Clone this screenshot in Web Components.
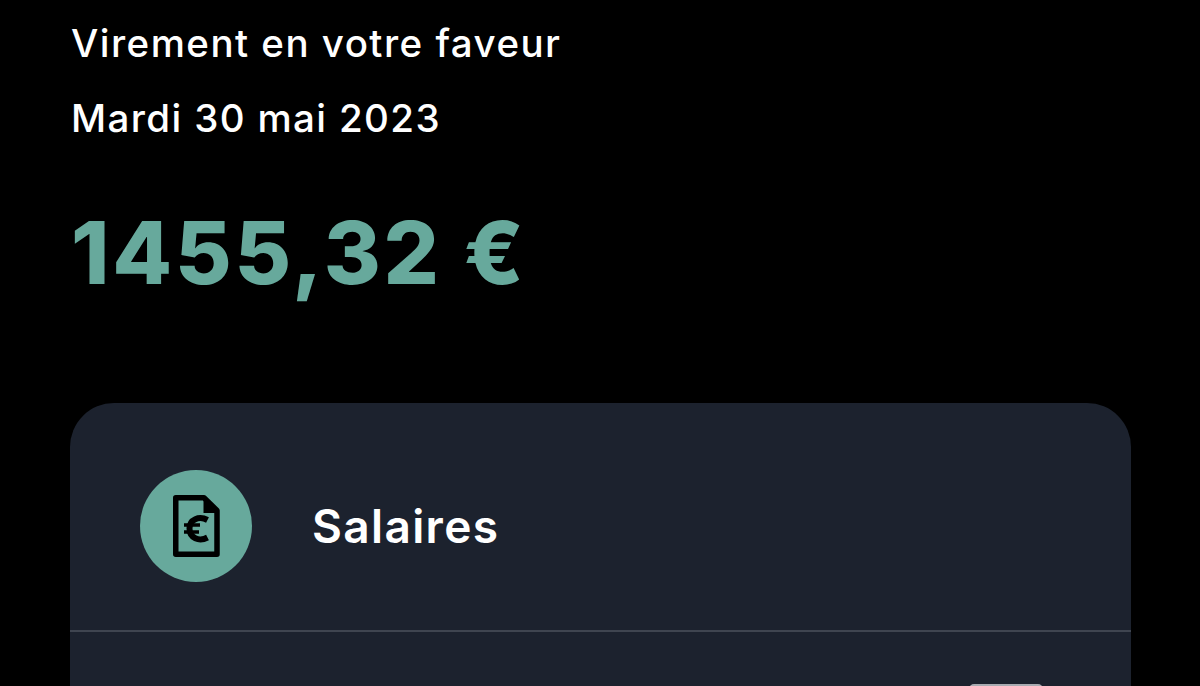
<!DOCTYPE html>
<html lang="fr">
<head>
<meta charset="utf-8">
<title>Virement</title>
<style>
html, body { margin: 0; height: 686px; overflow: hidden; background: #000; }
</style>
</head>
<body>
<transfer-screen>
    <transfer-header label="Virement en votre faveur" date="Mardi 30 mai 2023" amount="1455,32 €"></transfer-header>
    <detail-card>
        <category-row>Salaires</category-row>
    </detail-card>
</transfer-screen>

<script>
class TransferScreen extends HTMLElement {
    constructor() {
        super();
        this.shadowDOM = this.attachShadow({ mode: 'open' });
        this.shadowDOM.innerHTML = `
        <style>
        :host {
            display: flex;
            flex-direction: column;
            height: 686px;
            overflow: hidden;
            background: #000;
            padding: 0 69px 0 70px;
            box-sizing: border-box;
            font-family: Inter, "Liberation Sans", sans-serif;
        }
        </style>
        <slot></slot>
        `;
    }
}

class TransferHeader extends HTMLElement {
    constructor() {
        super();
        this.shadowDOM = this.attachShadow({ mode: 'open' });
    }

    connectedCallback() {
        this.shadowDOM.innerHTML = `
        <style>
        :host {
            display: block;
            padding: 0 0 0 1px;
            height: 403px;
            box-sizing: border-box;
        }
        p { margin: 0; color: #fff; white-space: nowrap; }
        .label { font-size: 38.5px; line-height: 44px; padding-top: 21px; font-weight: 500; letter-spacing: 1.47px; }
        .date { font-size: 38.5px; line-height: 44px; margin-top: 31px; font-weight: 500; letter-spacing: 1.37px; }
        .amount {
            font-size: 87px;
            line-height: 100px;
            margin-top: 63px;
            font-weight: 800;
            color: #67a99c;
            letter-spacing: 2.8px;
        }
        </style>
        <p class="label">${this.getAttribute('label')}</p>
        <p class="date">${this.getAttribute('date')}</p>
        <p class="amount">${this.getAttribute('amount')}</p>
        `;
    }
}

class DetailCard extends HTMLElement {
    constructor() {
        super();
        this.shadowDOM = this.attachShadow({ mode: 'open' });
        this.shadowDOM.innerHTML = `
        <style>
        :host {
            display: block;
            position: relative;
            flex: 1;
            background: #1c222e;
            border-radius: 44px 44px 0 0;
            margin-bottom: -60px;
        }
        .pill {
            position: absolute;
            top: 281px;
            right: 88px;
            width: 74px;
            height: 10px;
            border-radius: 5px;
            background: #a8abb1;
        }
        </style>
        <slot></slot>
        <div class="pill"></div>
        `;
    }
}

class CategoryRow extends HTMLElement {
    constructor() {
        super();
        this.shadowDOM = this.attachShadow({ mode: 'open' });
        this.shadowDOM.innerHTML = `
        <style>
        :host {
            display: flex;
            align-items: center;
            gap: 60px;
            height: 229px;
            padding: 18px 0 0 70px;
            box-sizing: border-box;
            border-bottom: 2px solid #3f4550;
        }
        .badge {
            width: 112px;
            height: 112px;
            border-radius: 50%;
            background: #67a99c;
            flex: none;
            display: flex;
            align-items: center;
            justify-content: center;
        }
        .name { font-size: 46px; font-weight: 600; color: #fff; letter-spacing: 1.35px; }
        </style>
        <div class="badge">
            <svg width="47" height="62" viewBox="0 0 47 62" fill="none" stroke="#000">
                <path d="M2.75 2.75H31L44 15.5V59.25H2.75Z" stroke-width="5.5" stroke-linejoin="round"/>
                <path d="M30.5 2V18H46Z" fill="#000" stroke="none"/>
                <path d="M34.5 25C26 20.5 16.5 24.5 16.5 33.5C16.5 43 26 47 34.5 42.5" stroke-width="6"/>
                <path d="M11 30H27M11 37H26" stroke-width="3.6"/>
            </svg>
        </div>
        <span class="name"><slot></slot></span>
        `;
    }
}

customElements.define('transfer-screen', TransferScreen);
customElements.define('transfer-header', TransferHeader);
customElements.define('detail-card', DetailCard);
customElements.define('category-row', CategoryRow);
</script>
</body>
</html>
